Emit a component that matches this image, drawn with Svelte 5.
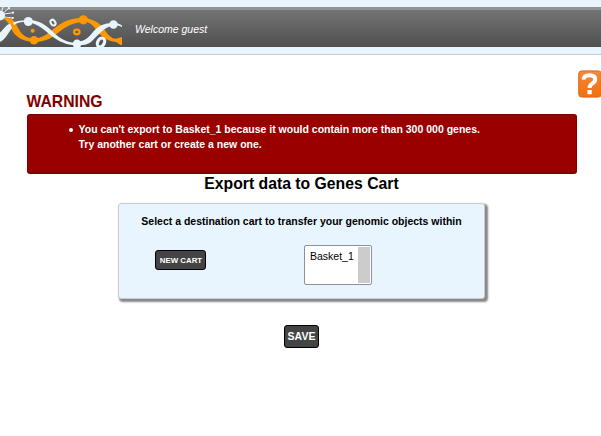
<script>
  const carts = ['Basket_1'];
  let selected = $state('');
</script>

<div class="page">
  <header>
    <div class="bar">
      <svg class="helix" width="122" height="40" viewBox="0 7 122 40" aria-hidden="true">
        <path d="M2 14L9 8M4 14L13 12.7M4 17L13 18M1 14L3 7" fill="none" stroke="#e8f5ff" stroke-width="1" />
        <g fill="#ff9800">
          <path d="M3 18.5C8 16 13 19 16 24C20 32 23 38 34 38.5C47 38 52 28 63 22.5C70 18.7 76 18.5 83 17.8V22C75 22 67 26 61 30.5C53 37 47 42 34 42C22 41 16 37 12.5 31C9 24 8 21 3 18.5Z" />
          <path d="M81 18C92 18 99 22 104 29C108 35 112 39.5 117 38.5L122 37V45C119 45 119 43 116 42C107 41 102 37 97 31C92 24 90 22 81 20.5Z" />
          <circle cx="34" cy="40.3" r="4.3" />
          <circle cx="83.3" cy="19.8" r="4.6" />
          <circle cx="32.6" cy="30.8" r="2" />
        </g>
        <g fill="#e8f5ff">
          <path d="M0 32.5C4 29 6 25 10 23.5L12 28C8 33 6 39 0 42Z" />
          <path d="M13 22.8C17 20.3 23 20.3 29 20.2V22C23 21.5 18 22.3 14 25Z" />
          <path d="M29 20C39 20 46 25 52 31C58 37 65 42.5 76 43L82 44.5C70 47 60 42 53 37C44 30 39 24 29 22.5Z" />
          <path d="M76 41.5C85 42 89 37 93 32C99 25 106 22.5 114 23C117 23 119 23.5 122 25.5V27C118 25 114 25 111 26C104 28 98 35 92 41C87 46 80 45 76 45Z" />
          <circle cx="0" cy="15.5" r="5" />
          <circle cx="28.3" cy="21.5" r="4.5" />
          <circle cx="77" cy="44" r="4.4" />
          <circle cx="113.5" cy="24.5" r="4.2" />
          <circle cx="13" cy="12.7" r="1.1" />
          <circle cx="12.8" cy="18" r="1.1" />
          <circle cx="9" cy="8.2" r="1.1" />
        </g>
        <ellipse cx="76.8" cy="32" rx="2.7" ry="2.3" fill="none" stroke="#ff9800" stroke-width="2.3" />
        <ellipse cx="53" cy="22.6" rx="2.2" ry="3.1" transform="rotate(-35 53 22.6)" fill="none" stroke="#e8f5ff" stroke-width="2" />
        <ellipse cx="101" cy="42.5" rx="3.3" ry="4.7" transform="rotate(28 101 42.5)" fill="none" stroke="#e8f5ff" stroke-width="3.2" />
      </svg>
      <span class="welcome">Welcome guest</span>
    </div>
  </header>

  <div class="help-row">
    <svg class="help" width="24" height="28" viewBox="0 0 24 28" role="img" aria-label="Help">
      <defs>
        <linearGradient id="orange" x2="0" y2="1">
          <stop stop-color="#f18a3f" />
          <stop offset=".5" stop-color="#f47b20" />
          <stop offset="1" stop-color="#ef7112" />
        </linearGradient>
      </defs>
      <rect x=".7" y=".9" width="22.6" height="26.2" rx="3" fill="url(#orange)" stroke="#d96c28" />
      <path d="M5.6 9.6C5.8 6.2 8.4 5.3 11.5 5.3C15.3 5.3 17.2 6.9 17.2 9.4C17.2 13.6 11.5 13.2 11.5 18" fill="none" stroke="#fff" stroke-width="4" />
      <rect x="9.4" y="20" width="4.3" height="4.3" rx=".5" fill="#fff" />
    </svg>
  </div>

  <main>
    <h2 class="warning-title">WARNING</h2>
    <div class="warning">
      <ul>
        <li>You can't export to Basket_1 because it would contain more than 300 000 genes.<br />Try another cart or create a new one.</li>
      </ul>
    </div>
    <h1>Export data to Genes Cart</h1>
    <section class="panel">
      <p>Select a destination cart to transfer your genomic objects within</p>
      <div class="choices">
        <button class="new">NEW CART</button>
        <div class="list" role="listbox" aria-label="Destination cart">
          <div class="options">
            {#each carts as cart}
              <div class="option" role="option" tabindex="0" aria-selected={selected === cart} onclick={() => (selected = cart)} onkeydown={() => (selected = cart)}>{cart}</div>
            {/each}
          </div>
          <div class="track"></div>
        </div>
      </div>
    </section>
    <button class="save">SAVE</button>
  </main>
</div>

<style>
  :global(body) { background: #fff; overflow: hidden; }
  .page {
    width: 601px;
    height: 436px;
    overflow: hidden;
    font-family: "Liberation Sans", Arial, sans-serif;
    font-size: 10.5px;
    color: #000;
  }
  header {
    box-sizing: border-box;
    height: 55px;
    padding-top: 7px;
    background: #e8f5ff;
    border-bottom: 1px solid #c8ccd0;
  }
  .bar {
    display: flex;
    height: 40px;
    background: linear-gradient(#929292 0 3px, #737373 3px, #505050 40px);
  }
  .helix { flex: none; }
  .welcome {
    margin-left: 13px;
    line-height: 44px;
    font-style: italic;
    color: #fff;
  }
  .help-row {
    display: flex;
    justify-content: flex-end;
    height: 28px;
    padding-top: 15px;
    margin-right: -1px;
  }
  main {
    display: flex;
    flex-direction: column;
    align-items: center;
    width: 550px;
    margin-left: 27px;
  }
  h1, h2, p, ul { margin: 0; }
  h1, h2 { font-size: 15.75px; line-height: 18px; }
  .warning-title {
    align-self: flex-start;
    margin: -5px 0 3px -.5px;
    color: #800000;
  }
  .warning {
    box-sizing: border-box;
    width: 550px;
    height: 60px;
    padding: 7px 0 0 50.5px;
    border: 2px solid #800000;
    border-width: 1px 1px 2px;
    border-radius: 3px;
    background: #900;
    color: #fff;
    font-weight: bold;
    line-height: 15px;
  }
  ul { padding: 0; list-style: none; }
  li::before {
    content: "";
    float: left;
    width: 4px;
    height: 4px;
    margin: 6px 0 0 -9.5px;
    border-radius: 50%;
    background: #fff;
  }
  h1 { margin: 1px 1px 0 0; }
  .panel {
    box-sizing: border-box;
    width: 367px;
    height: 96px;
    margin: 10px 1px 0 0;
    padding-top: 10px;
    border: 1px solid #ccc;
    border-radius: 3px;
    background: #e8f5ff;
    box-shadow: 2px 2px 2px 1px #888;
  }
  .panel p {
    text-align: center;
    font-weight: bold;
    line-height: 14px;
  }
  .choices {
    display: flex;
    align-items: flex-start;
    gap: 98px;
    padding: 17px 0 0 36px;
  }
  button {
    box-sizing: border-box;
    padding: 0;
    border: 1px solid #000;
    border-radius: 3px;
    background: #444;
    color: #fff;
    font-family: inherit;
    font-weight: bold;
    white-space: nowrap;
  }
  .new { width: 51px; height: 20px; margin-top: 5px; padding-left: 1px; font-size: 7.875px; }
  .save { width: 35px; height: 23px; margin: 26px 1px 0 0; padding-bottom: 1px; font-size: 10.5px; }
  .list {
    box-sizing: border-box;
    display: flex;
    width: 68px;
    height: 40px;
    padding: 1px;
    border: 1px solid #8f8f9d;
    border-radius: 2px;
    background: #fff;
  }
  .options { flex: 1; }
  .option { padding: 3px 0 0 4px; line-height: 13px; }
  .track { width: 12px; background: #ccc; }
</style>
